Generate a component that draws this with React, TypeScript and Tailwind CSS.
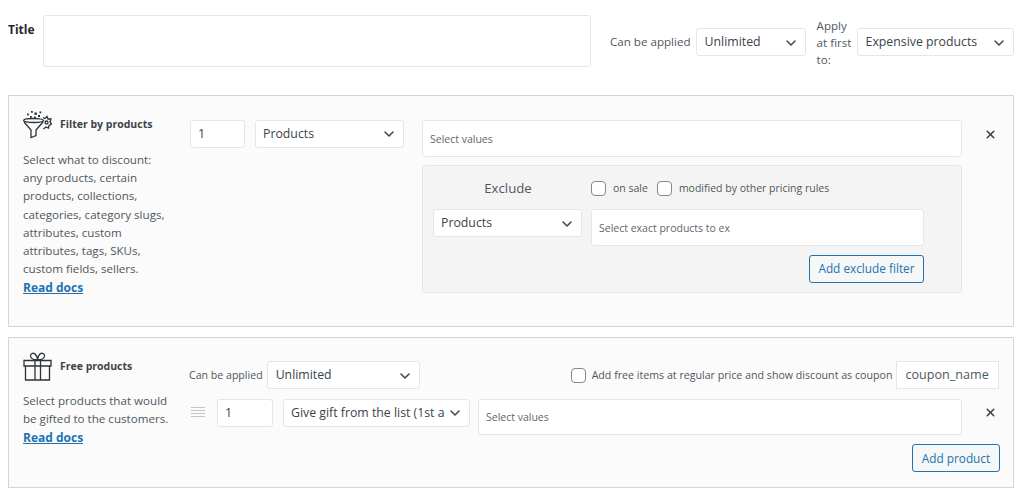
import { ChevronDown, X } from "lucide-react";

const font = { fontFamily: '"Open Sans", "Noto Sans", sans-serif' };

function Select({ value, className }: { value: string; className: string }) {
  return (
    <div className={`flex items-center justify-between bg-white border border-[#e6e6e6] rounded-[3px] pl-2 pr-[6px] text-[12.3px] text-[#3c434a] overflow-hidden whitespace-nowrap shrink-0 ${className}`}>
      <span className="overflow-hidden">{value}</span>
      <ChevronDown className="w-4 h-4 text-[#3c434a] shrink-0" strokeWidth={2.2} />
    </div>
  );
}

function Box({ text, className }: { text: string; className: string }) {
  return (
    <div className={`flex items-center bg-white border border-[#e6e6e6] rounded-[3px] pl-[7px] pt-[2px] text-[10.5px] text-[#5f666d] overflow-hidden whitespace-nowrap shrink-0 ${className}`}>
      {text}
    </div>
  );
}

function Check({ label, className }: { label: string; className?: string }) {
  return (
    <div className={`flex items-center gap-[7px] text-[10.5px] text-[#50575e] whitespace-nowrap ${className ?? ""}`}>
      <span className="w-[15px] h-[15px] rounded-[4px] border border-[#7e8993] bg-white shrink-0" />
      {label}
    </div>
  );
}

function Close() {
  return <X className="w-[13px] h-[13px] text-[#3c434a]" strokeWidth={3} />;
}

function Button({ label, className }: { label: string; className: string }) {
  return (
    <div className={`flex items-center justify-center rounded-[3px] border border-[#2271b1] bg-[#f6f7f7] text-[11.8px] text-[#2271b1] ${className}`}>
      {label}
    </div>
  );
}

function FunnelIcon() {
  return (
    <svg width="29" height="29" viewBox="0 0 29 29" fill="none" stroke="#2c3338" strokeWidth="1.3" className="shrink-0">
      <ellipse cx="10.5" cy="10.5" rx="10" ry="2" />
      <path d="M1 12 L8 20 V27.5 L13 25.5 V20 L20 12" />
      <path d="M20 7.5 L22 8.5 L24 6.5 L25 9 L28 9 L27 12 L28.5 14 L26 15.5 L25.5 18 L23 17 L20.5 19" />
      <circle cx="23.5" cy="12.5" r="1.5" />
      <g fill="#2c3338" stroke="none">
        <rect x="4" y="3.5" width="1.8" height="1.8" />
        <rect x="8" y="1" width="1.8" height="1.8" />
        <rect x="11.5" y="2.5" width="2.4" height="2.4" />
        <rect x="7" y="6" width="1.8" height="1.8" />
        <rect x="11" y="6.5" width="1.8" height="1.8" />
        <rect x="15" y="5" width="2" height="2" />
        <rect x="16.5" y="1.5" width="1.8" height="1.8" />
      </g>
    </svg>
  );
}

function GiftIcon() {
  return (
    <svg width="29" height="30" viewBox="0 0 29 30" fill="none" stroke="#2c3338" strokeWidth="1.3" className="shrink-0">
      <path d="M1 8.5 H28 V14 H1 Z" />
      <path d="M2.5 14 V28 H26.5 V14" />
      <path d="M12 8.5 V28 M17.5 8.5 V28" />
      <path d="M14.5 8 C11 8 7.5 6.5 7.5 3.5 C7.5 1 11 .5 12.5 2.5 C13.8 4.2 14.5 6 14.5 8 C14.5 6 15.2 4.2 16.5 2.5 C18 .5 21.5 1 21.5 3.5 C21.5 6.5 18 8 14.5 8Z" />
    </svg>
  );
}

function Docs({ className }: { className?: string }) {
  return <a className={`block text-[12px] font-bold text-[#2271b1] underline leading-[20px] ${className ?? ""}`}>Read docs</a>;
}

export default function App() {
  return (
    <div className="w-[1024px] h-[494px] bg-white overflow-hidden" style={font}>
      {/* title row */}
      <div className="flex h-[95px] pl-2">
        <div className="text-[12px] font-bold text-[#23282d] mt-[21px] w-[35px] shrink-0">Title</div>
        <div className="w-[548px] h-[52px] mt-[15px] shrink-0 bg-white border border-[#e6e6e6] rounded-[3px]" />
        <div className="flex items-center h-[84px] ml-[19px] shrink-0 text-[11.6px] text-[#50575e]">
          <span className="whitespace-nowrap">Can be applied</span>
          <Select value="Unlimited" className="w-[110px] h-[28px] ml-[5px] pt-[1px]" />
          <span className="w-[36px] ml-[11px] leading-[17px] whitespace-nowrap">Apply<br />at first<br />to:</span>
          <Select value="Expensive products" className="w-[157px] h-[28px] ml-[4px] pt-[1px]" />
        </div>
      </div>

      {/* filter panel */}
      <div className="w-[1006px] h-[232px] ml-2 flex bg-[#fbfbfb] border border-[#d5d5d5] pl-[14px]">
        <div className="w-[150px] pt-[14px] shrink-0">
          <div className="flex items-center gap-[8px]">
            <FunnelIcon />
            <span className="text-[10.5px] font-bold text-[#3c434a] whitespace-nowrap">Filter by products</span>
          </div>
          <p className="text-[11.6px] leading-[18.2px] text-[#50575e] mt-[12px] whitespace-nowrap">
            Select what to discount:<br />any products, certain<br />products, collections,<br />categories, category slugs,<br />attributes, custom<br />attributes, tags, SKUs,<br />custom fields, sellers.
          </p>
          <Docs />
        </div>
        <div className="flex items-start pt-[24px] ml-[17px]">
          <div className="flex items-center w-[55px] h-[28px] bg-white border border-[#e6e6e6] rounded-[3px] pl-[7px] text-[12.5px] text-[#3c434a]">1</div>
          <Select value="Products" className="w-[149px] h-[28px] ml-[10px] !pl-[7px]" />
          <div className="ml-[18px] w-[540px]">
            <Box text="Select values" className="w-[540px] h-[37px]" />
            <div className="mt-[8px] h-[128px] bg-[#f4f4f4] border border-[#e6e6e6] rounded-[3px] pl-[10px]">
              <div className="flex pt-[14px]">
                <div className="w-[150px] mr-[8px] -mt-[1px] text-center text-[13.2px] text-[#50575e] leading-[18px]">Exclude</div>
                <Check label="on sale" />
                <Check label="modified by other pricing rules" className="ml-[9px]" />
              </div>
              <div className="flex items-start mt-[12px]">
                <Select value="Products" className="w-[149px] h-[28px] !pl-[7px] pt-[1px]" />
                <Box text="Select exact products to ex" className="w-[333px] h-[37px] ml-[9px]" />
              </div>
              <div className="flex justify-end w-[491px] mt-[9px]">
                <Button label="Add exclude filter" className="w-[115px] h-[28px]" />
              </div>
            </div>
          </div>
          <div className="ml-[22px] mt-[8px]"><Close /></div>
        </div>
      </div>

      {/* free products panel */}
      <div className="w-[1006px] h-[151px] ml-2 mt-[10px] flex bg-[#fbfbfb] border border-[#d5d5d5] pl-[14px]">
        <div className="w-[150px] pt-[14px] shrink-0">
          <div className="flex items-center gap-[8px]">
            <GiftIcon />
            <span className="text-[10.5px] font-bold text-[#3c434a] whitespace-nowrap">Free products</span>
          </div>
          <p className="text-[11.6px] leading-[18.4px] text-[#50575e] mt-[10px] whitespace-nowrap">
            Select products that would<br />be gifted to the customers.
          </p>
          <Docs className="-mt-[1px]" />
        </div>
        <div className="ml-[16px] pt-[23px] w-[811px]">
          <div className="flex items-center h-[28px]">
            <span className="text-[10.6px] text-[#50575e] whitespace-nowrap pt-[1px]">Can be applied</span>
            <Select value="Unlimited" className="w-[153px] h-[28px] ml-[4px] pt-[1px]" />
            <Check label="Add free items at regular price and show discount as coupon" className="ml-[151px] !gap-[6px] !text-[10.65px] pt-[1px]" />
            <div className="flex items-center w-[103px] h-[28px] ml-[4px] shrink-0 bg-white border border-[#e6e6e6] pl-2 text-[12.6px] text-[#50575e]">coupon_name</div>
          </div>
          <div className="flex items-start mt-[10px]">
            <div className="w-[14px] mt-[8px] ml-[2px] flex flex-col gap-[2px]">
              <span className="h-[1px] bg-[#c3c4c7]" />
              <span className="h-[1px] bg-[#c3c4c7]" />
              <span className="h-[1px] bg-[#c3c4c7]" />
              <span className="h-[1px] bg-[#c3c4c7]" />
            </div>
            <div className="flex items-center w-[56px] h-[28px] ml-[12px] bg-white border border-[#e6e6e6] rounded-[3px] pl-[7px] text-[12.5px] text-[#3c434a]">1</div>
            <Select value="Give gift from the list (1st a" className="w-[187px] h-[28px] ml-[10px] !pl-[7px]" />
            <Box text="Select values" className="w-[484px] h-[36px] ml-[8px]" />
            <div className="ml-[22px] mt-[7px]"><Close /></div>
          </div>
          <div className="flex justify-end w-[811px] mt-[9px]">
            <Button label="Add product" className="w-[88px] h-[28px] pt-[1px]" />
          </div>
        </div>
      </div>
    </div>
  );
}
